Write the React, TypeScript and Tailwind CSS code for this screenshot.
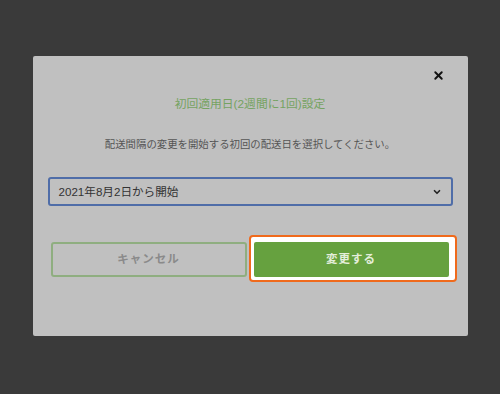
import { X, ChevronDown } from 'lucide-react';

export default function App() {
  return (
    <div
      className="flex h-[394px] w-[500px] items-start justify-center bg-[#3a3a3a] pt-[56px]"
      style={{ fontFamily: '"Liberation Sans", "Noto Sans CJK JP", sans-serif' }}
    >
      <div className="flex h-[280px] w-[435px] flex-col rounded-[2px] bg-[#c0c0c0] px-[15px]">
        <div className="flex justify-end pt-[13px] pr-[8px]">
          <X className="h-[13px] w-[13px] text-[#111]" strokeWidth={3.5} />
        </div>
        <h2 className="mt-[14px] text-center text-[11.8px] leading-[16px] text-[#75a362]">初回適用日(2週間に1回)設定</h2>
        <p className="mt-[26px] text-center text-[10.4px] leading-[14px] text-[#555]">配送間隔の変更を開始する初回の配送日を選択してください。</p>
        <div className="mt-[25px] flex h-[29px] items-center justify-between rounded-[3px] border-2 border-[#4f6da8] px-[9px]">
          <span className="text-[11.6px] text-[#333]">2021年8月2日から開始</span>
          <ChevronDown className="h-[10px] w-[10px] text-[#222]" strokeWidth={4} />
        </div>
        <div className="mt-[29px] flex items-start gap-[2px] pl-[3px]">
          <button className="mt-[7px] h-[35px] w-[196px] shrink-0 rounded-[3px] border-2 border-[#8fae80] text-[11.5px] font-bold tracking-[1px] text-[#8a8a8a]">
            キャンセル
          </button>
          <div className="shrink-0 rounded-[4px] border-2 border-[#f06a1c] bg-white pt-[5px] pr-[6px] pb-[3px] pl-[3px]">
            <button className="h-[35px] w-[195px] rounded-[2px] bg-[#66a13f] text-[11.5px] font-bold tracking-[1px] text-[#e4eedb]">
              変更する
            </button>
          </div>
        </div>
      </div>
    </div>
  );
}
